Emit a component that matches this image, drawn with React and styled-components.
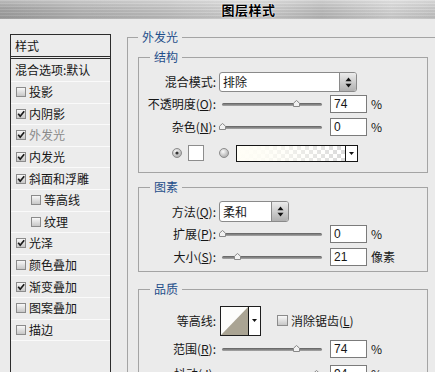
import React from 'react';
import styled, { createGlobalStyle } from 'styled-components';

const GlobalStyle = createGlobalStyle`
  html, body { margin: 0; padding: 0; overflow: hidden; background: #ebebeb; }
  body {
    font-family: "Noto Sans CJK SC", "Liberation Sans", sans-serif;
    font-size: 12px;
    color: #161616;
  }
  *, *::before, *::after { box-sizing: border-box; }
`;

const Window = styled.div`
  width: 435px;
  height: 372px;
  overflow: hidden;
  display: flex;
  flex-direction: column;
  background: #ebebeb;
`;

const TitleBar = styled.div`
  height: 19px;
  flex-shrink: 0;
  display: flex;
  align-items: center;
  justify-content: center;
  padding-left: 62px;
  background:
    linear-gradient(to bottom, rgba(255,255,255,0.3) 0%, rgba(255,255,255,0) 45%, rgba(0,0,0,0.07) 100%),
    repeating-linear-gradient(to bottom, rgba(255,255,255,0.07) 0 1px, rgba(0,0,0,0.05) 1px 3px),
    linear-gradient(to right, #a6a6a6 0%, #b9b9b9 18%, #c6c6c6 38%, #d8d8d8 56%, #c0c0c0 74%, #d9d9d9 90%, #cdcdcd 100%);
`;

const TitleText = styled.span`
  font-weight: 700;
  font-size: 13px;
  line-height: 19px;
  letter-spacing: 0.5px;
  color: #000;
  text-shadow: 0 0 2px #fff, 0 0 1px #fff;
`;

const Main = styled.div`
  flex: 1;
  min-height: 0;
  display: flex;
  align-items: stretch;
`;

const StyleList = styled.div`
  margin: 15px 0 0 10px;
  width: 101px;
  flex-shrink: 0;
  border: 1px solid #2c2c2c;
  border-bottom: none;
  background: #ececec;
  display: flex;
  flex-direction: column;
`;

const ListHeader = styled.div`
  height: 24px;
  flex-shrink: 0;
  display: flex;
  align-items: center;
  padding-left: 4px;
  line-height: 14px;
  border-bottom: 3px double #2c2c2c;
`;

const ListRow = styled.div`
  height: ${p => p.$h}px;
  flex-shrink: 0;
  display: flex;
  align-items: center;
  gap: 3px;
  padding-left: ${p => (p.$plain ? 4 : p.$indent ? 20 : 5)}px;
  line-height: 14px;
  white-space: nowrap;
  color: ${p => (p.$muted ? '#8a8a8a' : '#161616')};
  border-bottom: 1px solid #fafafa;
`;

const BoxSvg = styled.svg`
  flex-shrink: 0;
  display: block;
  margin-left: ${p => p.$ml || 0}px;
`;

function CheckBox({ checked, size = 10, ml }) {
  const id = `cb${size}`;
  return (
    <BoxSvg $ml={ml} width={size} height={size} viewBox={`0 0 ${size} ${size}`}>
      <defs>
        <linearGradient id={id} x1="0" y1="0" x2="0" y2="1">
          <stop offset="0" stopColor="#fbfbfb" />
          <stop offset="1" stopColor="#c4c4c4" />
        </linearGradient>
      </defs>
      <rect x="0.5" y="0.5" width={size - 1} height={size - 1} fill={`url(#${id})`} stroke="#8b8b8b" />
      {checked && (
        <path d="M2.2 4.8 L4.2 7.2 L8.2 2.2" fill="none" stroke="#1a1a1a" strokeWidth="1.7" />
      )}
    </BoxSvg>
  );
}

const Content = styled.div`
  margin: 11px 0 0 16px;
  width: 330px;
  flex-shrink: 0;
`;

const Group = styled.fieldset`
  margin: ${p => p.$mt || 0}px 0 0 0;
  padding: ${p => p.$pt}px 0 ${p => p.$pb}px ${p => p.$pl || 0}px;
  border: 1px solid #a4a4a4;
  min-width: 0;
  width: ${p => p.$w}px;
  min-height: ${p => p.$minh || 0}px;
`;

const Legend = styled.legend`
  margin-left: ${p => p.$ml}px;
  padding: 0 4px;
  height: 14px;
  line-height: 14px;
  font-size: 12px;
  color: #1f4e8a;
`;

const Row = styled.div`
  height: ${p => p.$h}px;
  display: flex;
  align-items: center;
  padding-left: ${p => p.$pl || 0}px;
`;

const Label = styled.div`
  width: 77px;
  flex-shrink: 0;
  text-align: right;
  white-space: nowrap;
  line-height: 14px;
`;

const Select = styled.div`
  margin-left: 3px;
  width: ${p => p.$w}px;
  height: ${p => p.$h}px;
  border: 1px solid #8a8a8a;
  border-radius: 3px;
  background: #fff;
  display: flex;
  overflow: hidden;
`;

const SelectText = styled.div`
  flex: 1;
  display: flex;
  align-items: center;
  padding-left: 3px;
  line-height: 14px;
`;

const SelectArrow = styled.div`
  width: 17px;
  border-left: 1px solid #8a8a8a;
  background: linear-gradient(to bottom, #ececec, #b0b0b0);
  display: flex;
  align-items: center;
  justify-content: center;
`;

function UpDown() {
  return (
    <svg width="7" height="11" viewBox="0 0 7 11">
      <path d="M3.5 0.5 L6.5 4.2 H0.5 Z" fill="#111" />
      <path d="M0.5 6.8 H6.5 L3.5 10.5 Z" fill="#111" />
    </svg>
  );
}

const Slider = styled.div`
  position: relative;
  margin-left: 6px;
  width: 100px;
  height: 10px;
  flex-shrink: 0;
  &::before {
    content: '';
    position: absolute;
    left: 0;
    right: 0;
    top: 4px;
    height: 3px;
    border-radius: 2px;
    background: linear-gradient(to bottom, #5f5f5f, #a9a9a9);
  }
`;

const Thumb = styled.svg`
  position: absolute;
  top: 1px;
  display: block;
`;

function Range({ pos }) {
  return (
    <Slider>
      <Thumb width="7" height="7" viewBox="0 0 7 7" style={{ left: `calc(${pos}% - 3.5px)` }}>
        <path d="M0.5 6.5 V3.2 L3.5 0.5 L6.5 3.2 V6.5 Z" fill="#f1f1f1" stroke="#888" />
      </Thumb>
    </Slider>
  );
}

const NumInput = styled.div`
  margin-left: 8px;
  width: 37px;
  height: 18px;
  flex-shrink: 0;
  border: 1px solid #7b7b7b;
  background: #fff;
  padding-left: 3px;
  line-height: 16px;
  font-family: "Liberation Sans", "Noto Sans CJK SC", sans-serif;
  font-size: 12px;
`;

const Unit = styled.span`
  margin-left: 4px;
  line-height: 14px;
`;

const RadioSvg = styled.svg`
  display: block;
  flex-shrink: 0;
  margin-left: ${p => p.$ml || 0}px;
`;

function Radio({ checked, ml }) {
  return (
    <RadioSvg $ml={ml} width="10" height="10" viewBox="0 0 10 10">
      <defs>
        <radialGradient id="rg" cx="0.4" cy="0.35" r="0.7">
          <stop offset="0" stopColor="#fafafa" />
          <stop offset="1" stopColor="#a6a6a6" />
        </radialGradient>
      </defs>
      <circle cx="5" cy="5" r="4.5" fill="url(#rg)" stroke="#8c8c8c" />
      {checked && <circle cx="5" cy="5" r="1.6" fill="#333" />}
    </RadioSvg>
  );
}

const ColorSwatch = styled.div`
  margin-left: 6px;
  width: 16px;
  height: 16px;
  border: 1px solid #8d8d8d;
  background: #fff;
  flex-shrink: 0;
`;

const GradientSwatch = styled.div`
  margin-left: 7px;
  width: 122px;
  height: 17px;
  border: 1px solid #151515;
  display: flex;
  flex-shrink: 0;
`;

const GradientPreview = styled.div`
  flex: 1;
  background:
    linear-gradient(to right, #fffef6 0%, rgba(255,254,246,0.9) 25%, rgba(255,255,255,0) 95%),
    repeating-conic-gradient(#dcdcdc 0 25%, #ffffff 0 50%) 0 0 / 8px 8px;
`;

const DropArrow = styled.div`
  width: 12px;
  border-left: 1px solid #151515;
  background: #fff;
  display: flex;
  align-items: center;
  justify-content: center;
  flex-shrink: 0;
`;

function DownTri() {
  return (
    <svg width="5" height="3" viewBox="0 0 5 3">
      <path d="M0 0 H5 L2.5 3 Z" fill="#111" />
    </svg>
  );
}

const ContourPicker = styled.div`
  margin-left: 4px;
  width: 41px;
  height: 30px;
  border: 1px solid #1e1e1e;
  display: flex;
  flex-shrink: 0;
`;

const ContourPreview = styled.svg`
  display: block;
  flex: 1;
`;

const CheckLabel = styled.span`
  margin-left: 3px;
  line-height: 14px;
  white-space: nowrap;
`;

const items = [
  { t: '投影' },
  { t: '内阴影', c: true },
  { t: '外发光', c: true, muted: true },
  { t: '内发光', c: true },
  { t: '斜面和浮雕', c: true },
  { t: '等高线', indent: true },
  { t: '纹理', indent: true },
  { t: '光泽', c: true },
  { t: '颜色叠加' },
  { t: '渐变叠加', c: true },
  { t: '图案叠加' },
  { t: '描边' },
];

export default function App() {
  return (
    <>
      <GlobalStyle />
      <Window>
        <TitleBar>
          <TitleText>图层样式</TitleText>
        </TitleBar>
        <Main>
          <StyleList>
            <ListHeader>样式</ListHeader>
            <ListRow $h={23} $plain>混合选项:默认</ListRow>
            {items.map(it => (
              <ListRow key={it.t} $h={21.6} $indent={it.indent} $muted={it.muted}>
                <CheckBox checked={it.c} />
                <span>{it.t}</span>
              </ListRow>
            ))}
          </StyleList>

          <Content>
            <Group $pt={6} $pb={0} $pl={10} $w={330} $minh={400}>
              <Legend $ml={0}>外发光</Legend>

              <Group $w={290} $pt={8} $pb={4}>
                <Legend $ml={11}>结构</Legend>
                <Row $h={20}>
                  <Label>混合模式:</Label>
                  <Select $w={138} $h={20}>
                    <SelectText>排除</SelectText>
                    <SelectArrow><UpDown /></SelectArrow>
                  </Select>
                </Row>
                <Row $h={24}>
                  <Label>不透明度(<u>O</u>):</Label>
                  <Range pos={74} />
                  <NumInput>74</NumInput>
                  <Unit>%</Unit>
                </Row>
                <Row $h={22}>
                  <Label>杂色(<u>N</u>):</Label>
                  <Range pos={0} />
                  <NumInput>0</NumInput>
                  <Unit>%</Unit>
                </Row>
                <Row $h={30} $pl={33}>
                  <Radio checked />
                  <ColorSwatch />
                  <Radio ml={15} />
                  <GradientSwatch>
                    <GradientPreview />
                    <DropArrow><DownTri /></DropArrow>
                  </GradientSwatch>
                </Row>
              </Group>

              <Group $w={290} $mt={7} $pt={7} $pb={3}>
                <Legend $ml={11}>图素</Legend>
                <Row $h={21}>
                  <Label>方法(<u>Q</u>):</Label>
                  <Select $w={70} $h={21}>
                    <SelectText>柔和</SelectText>
                    <SelectArrow><UpDown /></SelectArrow>
                  </Select>
                </Row>
                <Row $h={24}>
                  <Label>扩展(<u>P</u>):</Label>
                  <Range pos={0} />
                  <NumInput>0</NumInput>
                  <Unit>%</Unit>
                </Row>
                <Row $h={22}>
                  <Label>大小(<u>S</u>):</Label>
                  <Range pos={15} />
                  <NumInput>21</NumInput>
                  <Unit>像素</Unit>
                </Row>
              </Group>

              <Group $w={290} $mt={10} $pt={9} $pb={0} $minh={120}>
                <Legend $ml={11}>品质</Legend>
                <Row $h={31}>
                  <Label>等高线:</Label>
                  <ContourPicker>
                    <ContourPreview viewBox="0 0 28 28" preserveAspectRatio="none">
                      <rect x="0" y="0" width="28" height="28" fill="#fdfdfb" />
                      <path d="M0 28 L28 0 V28 Z" fill="#aaa493" />
                    </ContourPreview>
                    <DropArrow><DownTri /></DropArrow>
                  </ContourPicker>
                  <CheckBox size={11} ml={16} />
                  <CheckLabel>消除锯齿(<u>L</u>)</CheckLabel>
                </Row>
                <Row $h={26}>
                  <Label>范围(<u>R</u>):</Label>
                  <Range pos={74} />
                  <NumInput>74</NumInput>
                  <Unit>%</Unit>
                </Row>
                <Row $h={24}>
                  <Label>抖动(<u>J</u>):</Label>
                  <Range pos={94} />
                  <NumInput>94</NumInput>
                  <Unit>%</Unit>
                </Row>
              </Group>
            </Group>
          </Content>
        </Main>
      </Window>
    </>
  );
}
